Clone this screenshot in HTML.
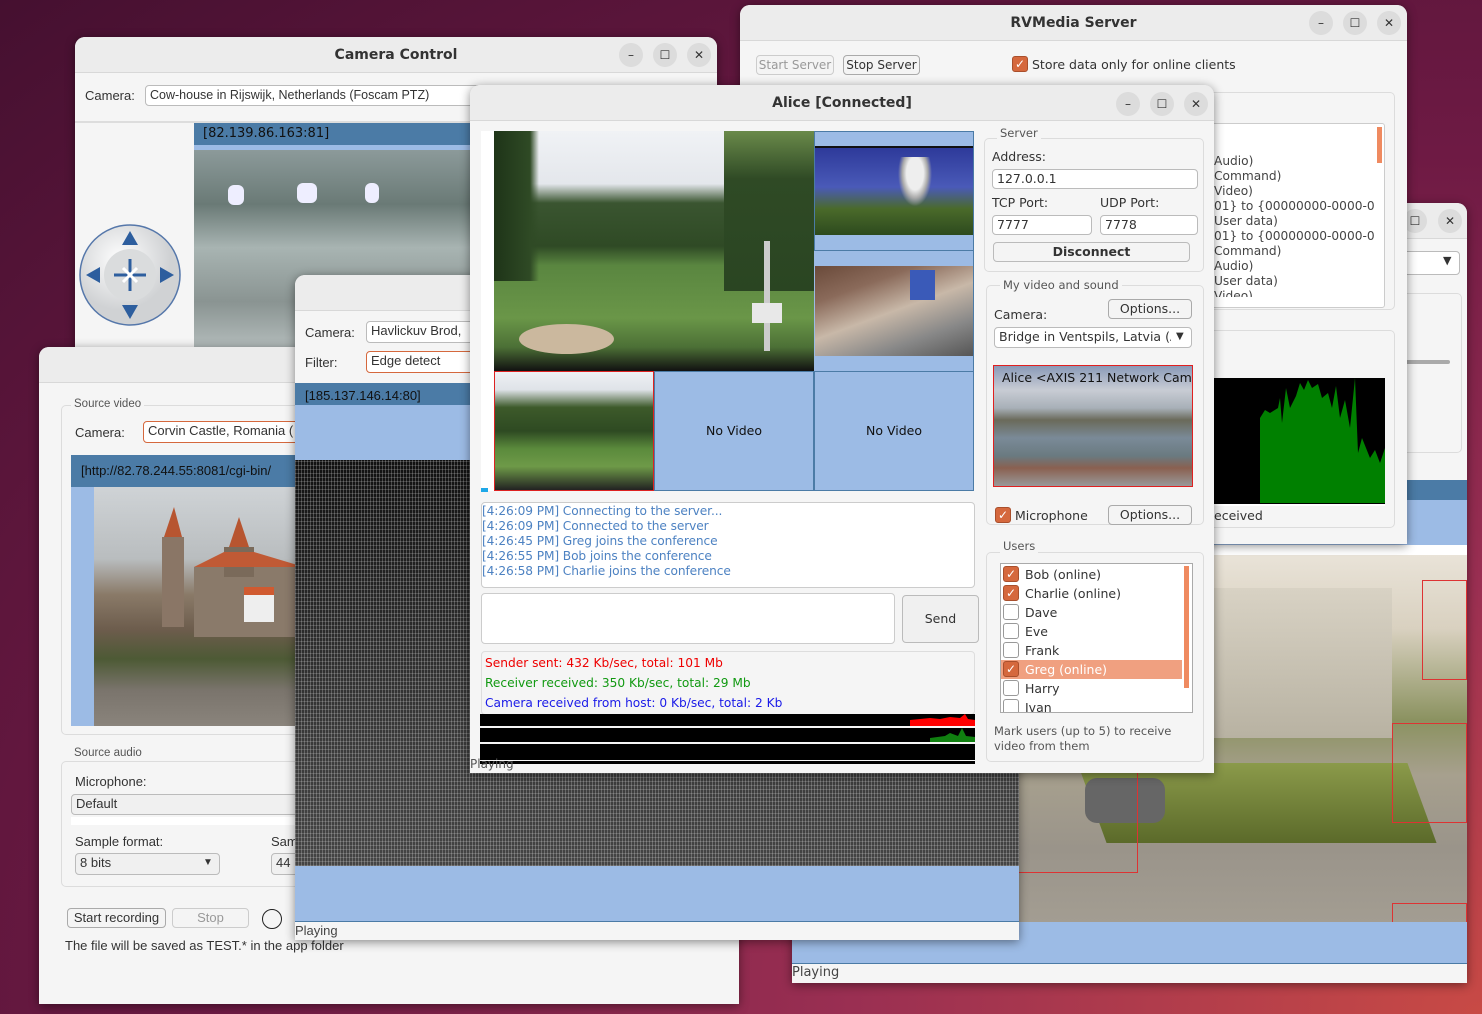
<!DOCTYPE html>
<html><head><meta charset="utf-8">
<style>
*{box-sizing:border-box;margin:0;padding:0}
body{width:1482px;height:1014px;overflow:hidden;position:relative;font-family:"DejaVu Sans","Liberation Sans",sans-serif;font-size:12.5px;color:#333;
background:radial-gradient(ellipse at 100% 100%,#c84a45 0%,#9a2f52 30%,#6e1a44 60%,#451030 100%);}
.a{position:absolute}
.win{position:absolute;background:#f5f5f5;border-radius:10px 10px 0 0;box-shadow:0 2px 10px rgba(0,0,0,.45);overflow:hidden}
.tb{position:absolute;left:0;right:0;top:0;height:36px;background:#ececec;border-bottom:1px solid #d8d8d8;text-align:center;font-weight:bold;font-size:14px;line-height:36px;color:#333}
.btn{position:absolute;width:24px;height:24px;border-radius:12px;background:#dcdcdc;font-size:12px;line-height:24px;text-align:center;color:#333;font-weight:normal}
.inp{position:absolute;background:#fff;border:1px solid #bbb;border-radius:4px;padding-left:4px;font-size:12.5px;line-height:18px;white-space:nowrap;overflow:hidden}
.pb{position:absolute;background:#f4f4f4;border:1px solid #aaa;border-radius:4px;text-align:center;font-size:12.5px;line-height:18px;white-space:nowrap;overflow:hidden}
.grp{position:absolute;border:1px solid #dcdcdc;border-radius:5px}
.gl{position:absolute;background:#f5f5f5;padding:0 3px;font-size:11.5px;color:#555}
.cb{position:absolute;width:16px;height:16px;border-radius:3px;background:#d5683d;border:1px solid #a94f2c;color:#fff;font-size:12px;line-height:14px;text-align:center}
.cbo{position:absolute;width:16px;height:16px;border-radius:3px;background:#fff;border:1px solid #999}
.t{position:absolute;white-space:nowrap}
.dk{background:#4b7ba6}
.lb{background:#9cbbe5}
</style></head><body>

<!-- bottom-right video window -->
<div class="win" style="left:792px;top:203px;width:675px;height:780px;">
 <div class="tb"></div>
 <div class="btn" style="left:611px;top:6px">☐</div>
 <div class="btn" style="left:646px;top:6px">✕</div>
 <div class="inp" style="left:600px;top:48px;width:68px;height:24px;border-radius:4px"></div>
 <div class="t" style="left:651px;top:51px;font-size:11px">▼</div>
 <div class="grp" style="left:600px;top:90px;width:70px;height:160px"></div>
 <div class="a" style="left:610px;top:157px;width:48px;height:4px;background:#aaa;border-radius:2px"></div>
 <div class="a dk" style="left:0;top:277px;width:675px;height:20px"></div>
 <div class="a lb" style="left:0;top:297px;width:675px;height:45px"></div>
 <div class="a" style="left:0;top:342px;width:675px;height:10px;background:#fff"></div>
 <div class="a" style="left:0;top:352px;width:675px;height:367px;background:linear-gradient(180deg,#e9e3d8 0%,#d9d1c0 20%,#8b9260 45%,#a7a08e 60%,#9a948a 80%,#a39d92 100%)"></div>
 <div class="a" style="left:400px;top:385px;width:200px;height:150px;background:linear-gradient(180deg,#d8d2c4,#b8b2a2)"></div>
 <div class="a" style="left:300px;top:560px;width:330px;height:80px;background:linear-gradient(180deg,#8b9a4a,#5b6a2a);transform:skewX(20deg)"></div>
 <div class="a" style="left:293px;top:575px;width:80px;height:45px;background:#666;border-radius:12px"></div>
 <div class="a" style="left:180px;top:475px;width:166px;height:195px;border:1px solid #d33"></div>
 <div class="a" style="left:600px;top:700px;width:75px;height:20px;border:1px solid #d33"></div>
 <div class="a" style="left:630px;top:377px;width:45px;height:100px;border:1px solid #d33"></div>
 <div class="a" style="left:600px;top:520px;width:75px;height:100px;border:1px solid #d33"></div>
 <div class="a lb" style="left:0;top:719px;width:675px;height:42px;border-bottom:1px solid #4b7ba6"></div>
 <div class="t" style="left:0;top:762px;font-size:13px;color:#444">Playing</div>
</div>

<!-- RVMedia Server -->
<div class="win" style="left:740px;top:5px;width:667px;height:539px;">
 <div class="tb">RVMedia Server</div>
 <div class="btn" style="left:569px;top:6px">–</div>
 <div class="btn" style="left:603px;top:6px">☐</div>
 <div class="btn" style="left:637px;top:6px">✕</div>
 <div class="pb" style="left:16px;top:50px;width:78px;height:20px;color:#999;border-color:#ccc;font-size:12px">Start Server</div>
 <div class="pb" style="left:103px;top:50px;width:77px;height:20px;font-size:12px">Stop Server</div>
 <div class="cb" style="left:272px;top:51px">✓</div>
 <div class="t" style="left:292px;top:52px;font-size:12.5px">Store data only for online clients</div>
 <div class="grp" style="left:440px;top:87px;width:215px;height:218px"></div>
 <div class="a" style="left:460px;top:118px;width:185px;height:185px;background:#fff;border:1px solid #ccc;border-radius:3px"></div>
 <div class="a" style="left:462px;top:120px;width:175px;height:172px;overflow:hidden"><div class="t" style="left:12px;top:29px;font-size:12.2px;line-height:15px;color:#444">Audio)<br>Command)<br>Video)<br>01} to {00000000-0000-0<br>User data)<br>01} to {00000000-0000-0<br>Command)<br>Audio)<br>User data)<br>Video)</div></div>
 <div class="a" style="left:637px;top:122px;width:5px;height:36px;background:#ef8a60"></div>
 <div class="grp" style="left:440px;top:325px;width:215px;height:198px"></div>
 <div class="a" style="left:470px;top:373px;width:175px;height:128px;background:#000;border-bottom:2px solid #fff"></div>
 <svg class="a" style="left:470px;top:373px" width="175" height="125"><path d="M50 125 L50 40 L55 32 L60 35 L68 30 L70 20 L72 45 L76 10 L80 30 L86 18 L90 5 L94 12 L98 2 L102 10 L108 6 L112 20 L118 15 L122 30 L126 8 L130 40 L135 22 L140 50 L145 0 L148 75 L152 60 L160 80 L165 72 L170 85 L175 70 L175 125Z" fill="#008000"/></svg>
 <div class="t" style="left:474px;top:503px;font-size:12.5px">eceived</div>
</div>

<!-- Camera Control -->
<div class="win" style="left:75px;top:37px;width:642px;height:330px;">
 <div class="tb">Camera Control</div>
 <div class="btn" style="left:544px;top:6px">–</div>
 <div class="btn" style="left:578px;top:6px">☐</div>
 <div class="btn" style="left:612px;top:6px">✕</div>
 <div class="t" style="left:10px;top:51px;font-family:'Liberation Sans';font-size:13px">Camera:</div>
 <div class="inp" style="left:70px;top:48px;width:560px;height:21px;font-family:'Liberation Sans'">Cow-house in Rijswijk, Netherlands (Foscam PTZ)</div>
 <div class="a" style="left:0;top:84px;width:642px;height:2px;background:#ddd"></div>
 <div class="a dk" style="left:119px;top:86px;width:523px;height:22px"></div>
 <div class="t" style="left:128px;top:89px;font-size:13px;color:#111">[82.139.86.163:81]</div>
 <div class="a lb" style="left:119px;top:108px;width:523px;height:5px"></div>
 <div class="a" style="left:119px;top:113px;width:523px;height:217px;background:linear-gradient(180deg,#8c9a9a 0%,#6a7a76 25%,#a8b4b2 45%,#8a9492 70%,#c4cccc 100%)"></div>
 <div class="a" style="left:153px;top:148px;width:16px;height:20px;background:#eef;border-radius:6px"></div>
 <div class="a" style="left:222px;top:146px;width:20px;height:20px;background:#eef;border-radius:6px"></div>
 <div class="a" style="left:290px;top:146px;width:14px;height:20px;background:#eef;border-radius:6px"></div>
 <svg class="a" style="left:3px;top:186px" width="106" height="106">
  <defs><radialGradient id="g1" cx="40%" cy="35%"><stop offset="0" stop-color="#fff"/><stop offset="1" stop-color="#d0d2d4"/></radialGradient></defs>
  <circle cx="52" cy="52" r="50" fill="url(#g1)" stroke="#5577aa" stroke-width="1.5"/>
  <circle cx="52" cy="52" r="26" fill="#dadcdd"/>
  <path d="M52 8 L44 22 L60 22Z M52 96 L44 82 L60 82Z M8 52 L22 44 L22 60Z M96 52 L82 44 L82 60Z" fill="#2d5e9e"/>
  <path d="M52 36 V68 M36 52 H68" stroke="#2d5e9e" stroke-width="3"/>
  <path d="M45 45 L59 59 M59 45 L45 59" stroke="#fff" stroke-width="3"/>
 </svg>
</div>

<!-- Source video window -->
<div class="win" style="left:39px;top:347px;width:700px;height:657px;font-family:'Liberation Sans',sans-serif;">
 <div class="tb"></div>
 <div class="grp" style="left:22px;top:58px;width:660px;height:330px"></div>
 <div class="gl" style="left:32px;top:51px">Source video</div>
 <div class="t" style="left:36px;top:78px;font-size:13px">Camera:</div>
 <div class="inp" style="left:104px;top:74px;width:200px;height:22px;border-color:#d5683d;font-size:13px">Corvin Castle, Romania (</div>
 <div class="a dk" style="left:32px;top:108px;width:240px;height:32px"></div>
 <div class="t" style="left:42px;top:116px;font-size:13px;color:#111">[http://82.78.244.55:8081/cgi-bin/</div>
 <div class="a lb" style="left:32px;top:140px;width:240px;height:239px"></div>
 <div class="a" style="left:55px;top:140px;width:217px;height:239px;background:linear-gradient(180deg,#cfd3d6 0%,#b9bdbf 30%,#8a7a68 45%,#6c5c4c 60%,#4d5a35 72%,#7a746c 85%,#8a847c 100%)"></div>
 <svg class="a" style="left:55px;top:150px" width="217" height="180"><path d="M70 40 L80 10 L88 40Z M135 50 L145 20 L155 50Z" fill="#b75530"/><rect x="68" y="40" width="22" height="90" fill="#8a7666"/><rect x="100" y="70" width="110" height="70" fill="#8a7a6a"/><rect x="130" y="50" width="30" height="30" fill="#7a6a5a"/><path d="M100 70 L130 55 L160 55 L210 70Z" fill="#c05a35"/><rect x="150" y="95" width="30" height="30" fill="#eee"/><rect x="150" y="90" width="30" height="8" fill="#d05a30"/></svg>
 <div class="grp" style="left:22px;top:414px;width:660px;height:126px"></div>
 <div class="gl" style="left:32px;top:400px">Source audio</div>
 <div class="t" style="left:36px;top:427px;font-size:13px">Microphone:</div>
 <div class="inp" style="left:32px;top:447px;width:240px;height:21px;background:#f0f0f0;font-size:13px">Default</div>
 <div class="a" style="left:32px;top:470px;width:240px;height:8px;background:#fff"></div>
 <div class="t" style="left:36px;top:487px;font-size:13px">Sample format:</div>
 <div class="t" style="left:232px;top:487px;font-size:13px">Sam</div>
 <div class="inp" style="left:36px;top:506px;width:145px;height:22px;background:#f0f0f0;font-size:13px">8 bits</div>
 <div class="t" style="left:164px;top:510px;font-size:10px">▼</div>
 <div class="inp" style="left:232px;top:506px;width:40px;height:22px;background:#f0f0f0;font-size:13px">44</div>
 <div class="pb" style="left:28px;top:561px;width:99px;height:20px;font-size:13px">Start recording</div>
 <div class="pb" style="left:133px;top:561px;width:77px;height:20px;color:#999;border-color:#ccc;font-size:13px">Stop</div>
 <div class="a" style="left:223px;top:562px;width:20px;height:20px;border:1.5px solid #222;border-radius:50%"></div>
 <div class="t" style="left:26px;top:591px;font-size:13px">The file will be saved as TEST.* in the app folder</div>
</div>

<!-- Edge detect window -->
<div class="win" style="left:295px;top:275px;width:724px;height:665px;font-family:'Liberation Sans',sans-serif;border-radius:10px 0 0 0">
 <div class="tb"></div>
 <div class="t" style="left:10px;top:50px;font-size:13px">Camera:</div>
 <div class="inp" style="left:71px;top:46px;width:200px;height:22px;font-size:13px">Havlickuv Brod,</div>
 <div class="t" style="left:10px;top:80px;font-size:13px">Filter:</div>
 <div class="inp" style="left:71px;top:76px;width:200px;height:22px;border-color:#d5683d;font-size:13px">Edge detect</div>
 <div class="a dk" style="left:0;top:108px;width:724px;height:22px"></div>
 <div class="t" style="left:10px;top:113px;color:#111;font-size:13px">[185.137.146.14:80]</div>
 <div class="a lb" style="left:0;top:130px;width:724px;height:55px"></div>
 <div class="a" style="left:0;top:185px;width:724px;height:406px;background:
  repeating-linear-gradient(90deg,rgba(255,255,255,.22) 0 1px,transparent 1px 3px),
  repeating-linear-gradient(0deg,rgba(255,255,255,.18) 0 1px,transparent 1px 4px),
  linear-gradient(180deg,#111 0%,#2a2a2a 40%,#3a3a3a 70%,#444 100%)"></div>
 <div class="a lb" style="left:0;top:591px;width:724px;height:56px;border-bottom:1px solid #4b7ba6"></div>
 <div class="t" style="left:0;top:648px;color:#444;font-size:13px">Playing</div>
</div>

<!-- Alice -->
<div class="win" style="left:470px;top:85px;width:744px;height:688px;">
 <div class="tb">Alice [Connected]</div>
 <div class="btn" style="left:646px;top:7px">–</div>
 <div class="btn" style="left:680px;top:7px">☐</div>
 <div class="btn" style="left:714px;top:7px">✕</div>
 <div class="a" style="left:11px;top:46px;width:13px;height:360px;background:#fff"></div>
 <div class="a" style="left:11px;top:403px;width:7px;height:4px;background:#1fa8e8"></div>
 <!-- video grid -->
 <div class="a lb" style="left:24px;top:46px;width:480px;height:360px;border:1px solid #4b7ba6"></div>
 <div class="a" style="left:24px;top:46px;width:320px;height:240px;overflow:hidden;background:linear-gradient(180deg,#f0f2f5 0%,#e4e7ec 22%,#3a5530 30%,#2f4a25 48%,#5a8640 56%,#6a9648 78%,#4c7036 90%,#111 100%)">
  <div class="a" style="left:0;top:0;width:45px;height:150px;background:linear-gradient(90deg,#1e3418,#2f4a25 80%,transparent)"></div>
  <div class="a" style="left:230px;top:0;width:90px;height:160px;background:linear-gradient(180deg,#6a8a4a 0%,#2f4a25 30%,#2a4522 100%)"></div>
  <div class="a" style="left:25px;top:193px;width:95px;height:30px;background:#cbb89e;border-radius:50%"></div>
  <div class="a" style="left:270px;top:110px;width:6px;height:110px;background:#ccc"></div>
  <div class="a" style="left:258px;top:172px;width:30px;height:20px;background:#e8e8e8"></div>
 </div>
 <div class="a" style="left:24px;top:286px;width:160px;height:120px;border:1px solid #d22;background:linear-gradient(180deg,#eef0f4 0%,#dfe3e8 15%,#3d5a2a 30%,#2e4a22 50%,#5b8a3c 65%,#6e9a48 80%,#222 100%)"></div>
 <div class="a" style="left:184px;top:286px;width:160px;height:120px;border:1px solid #4b7ba6;text-align:center;line-height:118px;color:#111">No Video</div>
 <div class="a" style="left:344px;top:286px;width:160px;height:120px;border:1px solid #4b7ba6;text-align:center;line-height:118px;color:#111">No Video</div>
 <div class="a" style="left:344px;top:46px;width:160px;height:120px;border:1px solid #4b7ba6"></div>
 <div class="a" style="left:345px;top:61px;width:158px;height:89px;background:linear-gradient(180deg,#2e3a9a 0%,#4a5ab8 45%,#4a6a2a 70%,#2d4a1e 100%);border-top:2px solid #111"></div>
 <div class="a" style="left:425px;top:72px;width:40px;height:55px;background:radial-gradient(ellipse at 50% 30%,#eee 30%,#aaa 45%,transparent 60%)"></div>
 <div class="a" style="left:345px;top:181px;width:158px;height:90px;background:linear-gradient(160deg,#6a4a3a 0%,#8a6a5a 25%,#c8b8a8 50%,#888 75%,#555 100%)"></div>
 <div class="a" style="left:440px;top:185px;width:25px;height:30px;background:#3a5ab8"></div>
 <!-- log -->
 <div class="a" style="left:11px;top:417px;width:494px;height:86px;background:#fff;border:1px solid #ccc;border-radius:4px"></div>
 <div class="t" style="left:12px;top:419px;color:#4d82c2;font-size:12.2px;line-height:15px;letter-spacing:-0.1px">[4:26:09 PM] Connecting to the server...<br>[4:26:09 PM] Connected to the server<br>[4:26:45 PM] Greg joins the conference<br>[4:26:55 PM] Bob joins the conference<br>[4:26:58 PM] Charlie joins the conference</div>
 <div class="a" style="left:11px;top:508px;width:414px;height:51px;background:#fff;border:1px solid #ccc;border-radius:4px"></div>
 <div class="pb" style="left:432px;top:510px;width:77px;height:48px;line-height:46px;border-color:#bbb;background:#f0f0f0">Send</div>
 <div class="a" style="left:11px;top:566px;width:494px;height:64px;border:1px solid #ddd;border-radius:4px"></div>
 <div class="t" style="left:15px;top:568px;font-size:12.2px;line-height:20px"><span style="color:#e00">Sender sent: 432 Kb/sec, total: 101 Mb</span><br><span style="color:#119911">Receiver received: 350 Kb/sec, total: 29 Mb</span><br><span style="color:#1a1ae8">Camera received from host: 0 Kb/sec, total: 2 Kb</span></div>
 <div class="a" style="left:10px;top:629px;width:495px;height:12px;background:#000"></div>
 <div class="a" style="left:10px;top:643px;width:495px;height:14px;background:#000"></div>
 <div class="a" style="left:10px;top:659px;width:495px;height:16px;background:#000"></div>
 <div class="a" style="left:10px;top:676px;width:495px;height:3px;background:#000"></div>
 <svg class="a" style="left:440px;top:629px" width="65" height="28"><path d="M0 12 V6 L10 5 L20 4 L30 5 L40 3 L50 4 L55 0 L58 5 L65 6 V12Z" fill="#f00"/><path d="M20 28 V24 L35 22 L40 19 L48 22 L52 14 L56 22 L65 23 V28Z" fill="#108010"/></svg>
 <div class="t" style="left:0;top:672px;font-size:12px;color:#555">Playing</div>
 <!-- right panel -->
 <div class="grp" style="left:514px;top:53px;width:220px;height:134px"></div>
 <div class="gl" style="left:527px;top:41px">Server</div>
 <div class="t" style="left:522px;top:64px">Address:</div>
 <div class="inp" style="left:522px;top:84px;width:206px;height:20px">127.0.0.1</div>
 <div class="t" style="left:522px;top:110px">TCP Port:</div>
 <div class="t" style="left:630px;top:110px">UDP Port:</div>
 <div class="inp" style="left:522px;top:130px;width:100px;height:20px">7777</div>
 <div class="inp" style="left:630px;top:130px;width:98px;height:20px">7778</div>
 <div class="pb" style="left:523px;top:157px;width:197px;height:20px;font-weight:bold;border-color:#bbb">Disconnect</div>
 <div class="grp" style="left:516px;top:200px;width:218px;height:240px"></div>
 <div class="gl" style="left:530px;top:193px">My video and sound</div>
 <div class="t" style="left:524px;top:222px">Camera:</div>
 <div class="pb" style="left:638px;top:214px;width:84px;height:20px">Options...</div>
 <div class="a" style="left:524px;top:242px;width:198px;height:21px;background:#fff;border:1px solid #bbb;border-radius:4px;overflow:hidden">
  <div class="t" style="left:4px;top:1px;width:172px;overflow:hidden">Bridge in Ventspils, Latvia (A</div>
  <div class="t" style="left:181px;top:3px;font-size:10px">▼</div>
 </div>
 <div class="a" style="left:523px;top:280px;width:200px;height:122px;overflow:hidden;border:1px solid #e02020;background:linear-gradient(180deg,#8a9ab8 0%,#c8ccd4 20%,#a8b0b8 35%,#6a6a5a 45%,#7a8a98 60%,#6a7a80 75%,#8a6050 85%,#999 100%)">
  <div class="t" style="left:8px;top:4px;color:#111">Alice &lt;AXIS 211 Network Came</div>
 </div>
 <div class="cb" style="left:525px;top:422px">✓</div>
 <div class="t" style="left:545px;top:423px">Microphone</div>
 <div class="pb" style="left:638px;top:420px;width:84px;height:20px">Options...</div>
 <div class="grp" style="left:516px;top:467px;width:218px;height:210px"></div>
 <div class="gl" style="left:530px;top:454px">Users</div>
 <div class="a" style="left:530px;top:478px;width:193px;height:150px;background:#fff;border:1px solid #aaa"></div>
 <div class="a" style="left:714px;top:481px;width:5px;height:122px;background:#ef8a60"></div>
 <div class="a" style="left:531px;top:575px;width:181px;height:19px;background:#f0a080"></div>
 <div class="cb" style="left:533px;top:481px">✓</div><div class="t" style="left:555px;top:482px">Bob (online)</div>
 <div class="cb" style="left:533px;top:500px">✓</div><div class="t" style="left:555px;top:501px">Charlie (online)</div>
 <div class="cbo" style="left:533px;top:519px"></div><div class="t" style="left:555px;top:520px">Dave</div>
 <div class="cbo" style="left:533px;top:538px"></div><div class="t" style="left:555px;top:539px">Eve</div>
 <div class="cbo" style="left:533px;top:557px"></div><div class="t" style="left:555px;top:558px">Frank</div>
 <div class="cb" style="left:533px;top:576px">✓</div><div class="t" style="left:555px;top:577px;color:#fff">Greg (online)</div>
 <div class="cbo" style="left:533px;top:595px"></div><div class="t" style="left:555px;top:596px">Harry</div>
 <div class="a" style="left:531px;top:612px;width:181px;height:15px;overflow:hidden"><div class="cbo" style="left:2px;top:2px"></div><div class="t" style="left:24px;top:3px">Ivan</div></div>
 <div class="t" style="left:524px;top:639px;font-size:11.5px;line-height:15px;color:#555">Mark users (up to 5) to receive<br>video from them</div>
</div>
</body></html>
